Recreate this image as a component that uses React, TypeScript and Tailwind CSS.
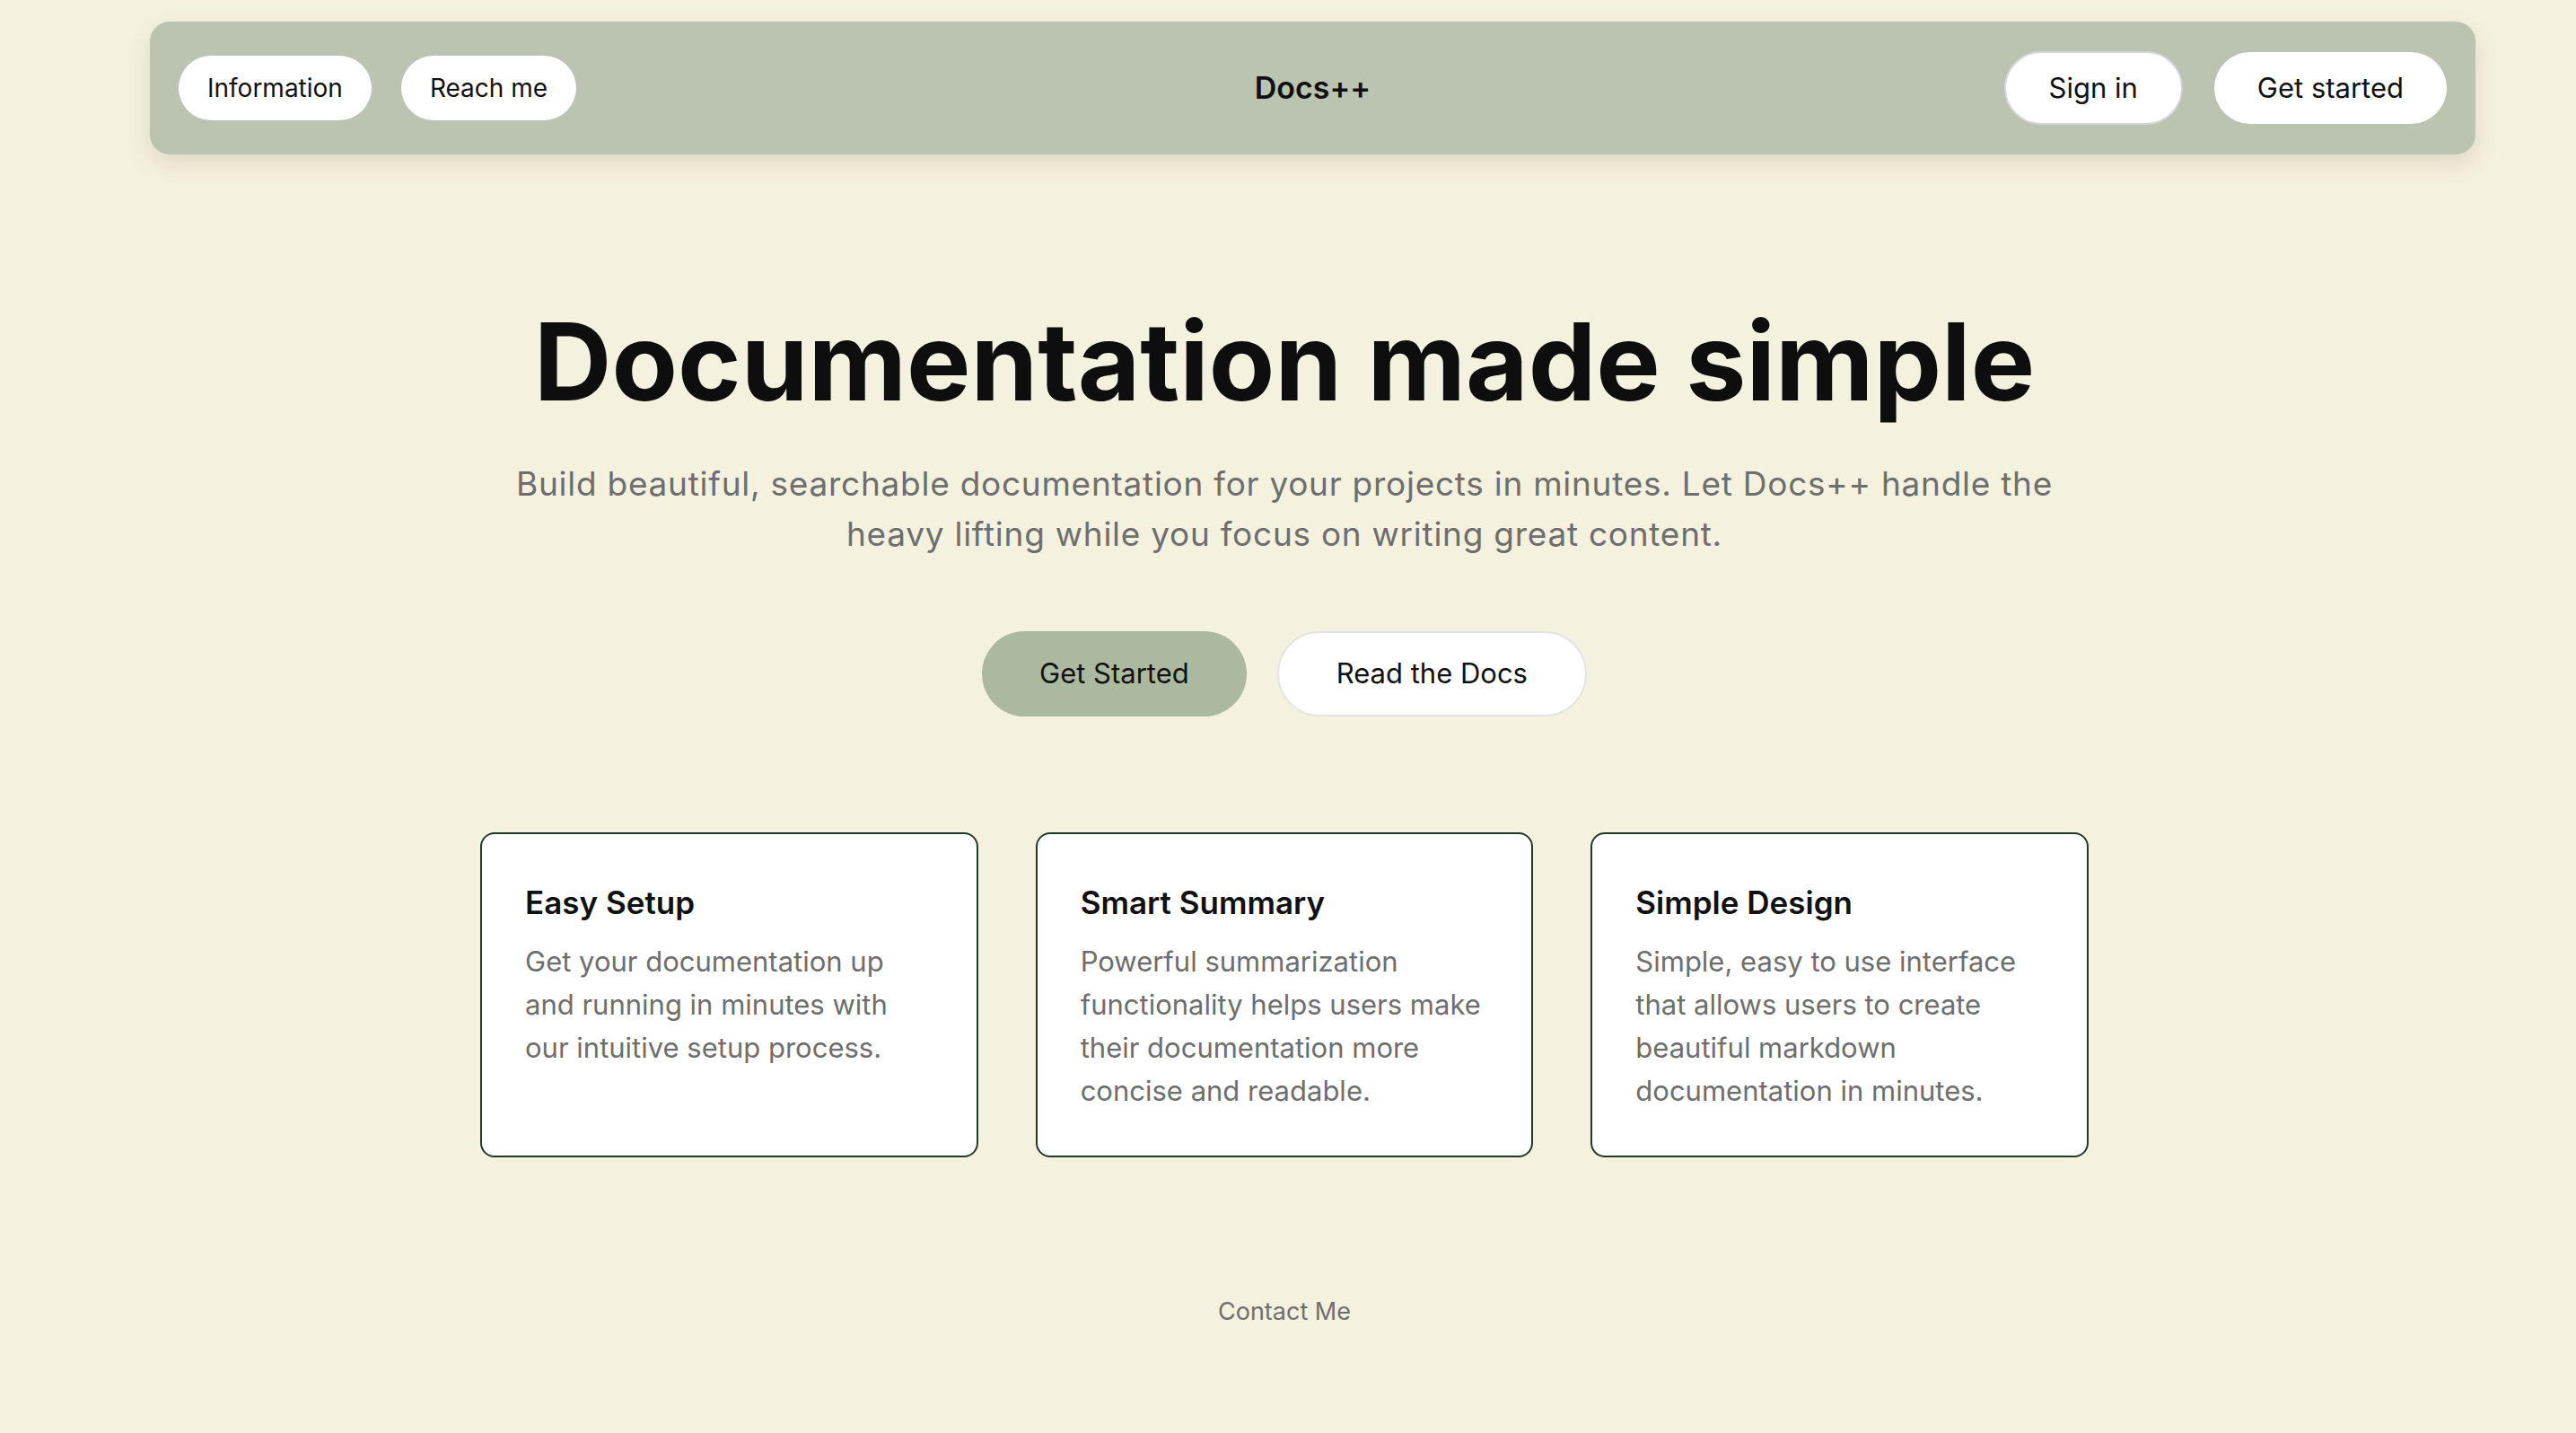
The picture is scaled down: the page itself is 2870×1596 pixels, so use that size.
import React from 'react';

const features = [
  {
    title: 'Easy Setup',
    lines: ['Get your documentation up', 'and running in minutes with', 'our intuitive setup process.'],
  },
  {
    title: 'Smart Summary',
    lines: ['Powerful summarization', 'functionality helps users make', 'their documentation more', 'concise and readable.'],
  },
  {
    title: 'Simple Design',
    lines: ['Simple, easy to use interface', 'that allows users to create', 'beautiful markdown', 'documentation in minutes.'],
  },
];

const App: React.FC = () => {
  return (
    <div className="min-h-screen bg-[#f4f1df] text-[#111111] font-['Inter','Noto_Sans',sans-serif] pt-[24px]">
      <header className="ml-[167px] w-[2591px] h-[148px] rounded-[22px] bg-[#bac4b0] shadow-[0_10px_24px_rgba(120,110,70,0.18)] px-[32px] flex items-center justify-between">
        <nav className="flex items-center gap-[33px] w-[700px]">
          <a href="#" className="bg-white rounded-full px-[32px] py-[16px] text-[28px] leading-[40px]">Information</a>
          <a href="#" className="bg-white rounded-full px-[32px] py-[16px] text-[28px] leading-[40px]">Reach me</a>
        </nav>
        <h1 className="text-[34px] font-semibold leading-[48px]">Docs++</h1>
        <div className="flex items-center justify-end gap-[35px] w-[700px]">
          <button className="bg-white rounded-full border-2 border-[#d4d6dc] px-[48px] py-[15px] text-[31px] leading-[48px]">Sign in</button>
          <button className="bg-white rounded-full px-[48px] py-[16px] text-[31px] leading-[48px]">Get started</button>
        </div>
      </header>

      <main className="flex flex-col items-center pt-[171px] pr-[8px]">
        <h2 className="text-[120px] leading-[120px] font-bold text-[#0e0e0e]">Documentation made simple</h2>
        <p className="mt-[48px] text-[37px] leading-[56px] tracking-[0.02em] text-[#6e6e6e] text-center">
          <span className="block whitespace-nowrap">Build beautiful, searchable documentation for your projects in minutes. Let Docs++ handle the</span>
          <span className="block whitespace-nowrap">heavy lifting while you focus on writing great content.</span>
        </p>

        <div className="mt-[80px] flex gap-[34px]">
          <button className="h-[95px] px-[64px] rounded-full bg-[#abb9a1] text-[31px]">Get Started</button>
          <button className="h-[95px] px-[64px] rounded-full bg-white border-2 border-[#e4e4e4] text-[31px]">Read the Docs</button>
        </div>

        <section className="mt-[129px] w-[1792px] grid grid-cols-3 gap-[64px]">
          {features.map((f) => (
            <div key={f.title} className="bg-white border-2 border-[#1f3a25] rounded-[16px] p-[48px]">
              <h3 className="text-[35px] leading-[56px] font-semibold mb-[14px]">{f.title}</h3>
              <p className="text-[31px] leading-[48px] text-[#6e6e6e]">
                {f.lines.map((l) => (
                  <span key={l} className="block whitespace-nowrap">{l}</span>
                ))}
              </p>
            </div>
          ))}
        </section>

        <footer className="mt-[152px] pb-[60px]">
          <a href="#" className="text-[27px] leading-[40px] text-[#6e6e6e]">Contact Me</a>
        </footer>
      </main>
    </div>
  );
};

export default App;
